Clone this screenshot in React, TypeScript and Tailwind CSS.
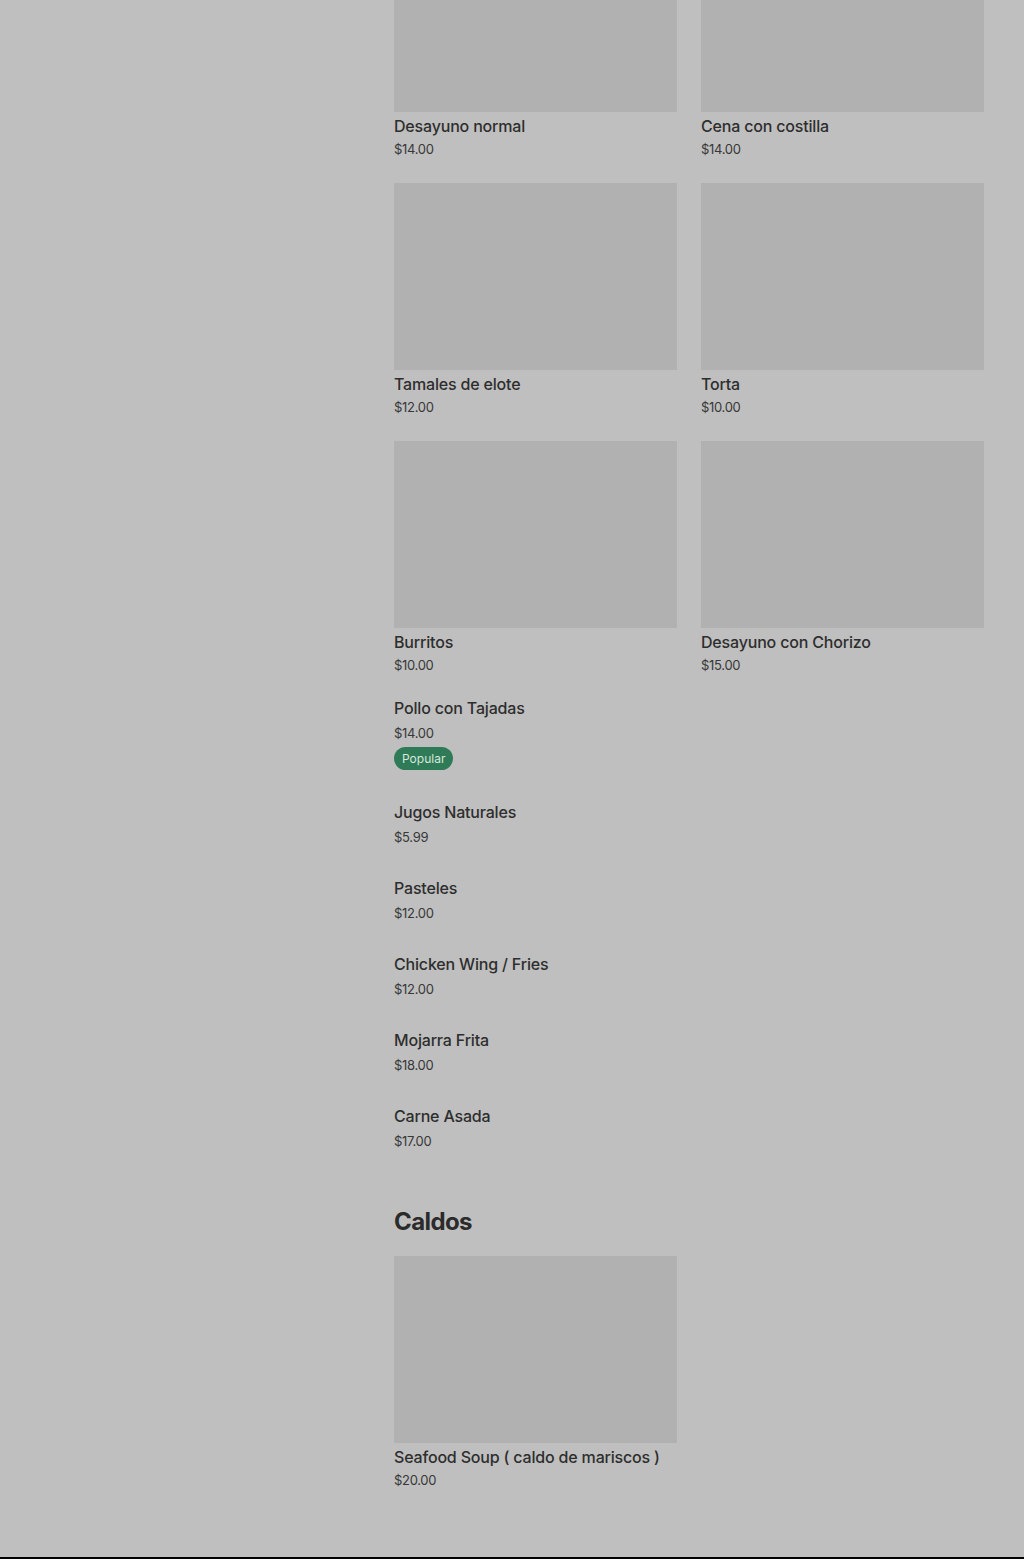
import React from "react";

interface Item {
  name: string;
  price: string;
  popular?: boolean;
}

const gridItems: Item[] = [
  { name: "Desayuno normal", price: "$14.00" },
  { name: "Cena con costilla", price: "$14.00" },
  { name: "Tamales de elote", price: "$12.00" },
  { name: "Torta", price: "$10.00" },
  { name: "Burritos", price: "$10.00" },
  { name: "Desayuno con Chorizo", price: "$15.00" },
];

const listItems: Item[] = [
  { name: "Pollo con Tajadas", price: "$14.00", popular: true },
  { name: "Jugos Naturales", price: "$5.99" },
  { name: "Pasteles", price: "$12.00" },
  { name: "Chicken Wing / Fries", price: "$12.00" },
  { name: "Mojarra Frita", price: "$18.00" },
  { name: "Carne Asada", price: "$17.00" },
];

function Card({ item }: { item: Item }) {
  return (
    <div className="flex flex-col">
      <div className="h-[187px] w-full bg-[#b1b1b1]"></div>
      <div className="mt-1 text-[16px] leading-5 font-medium tracking-[-0.18px] text-[#2e2e2e]">{item.name}</div>
      <div className="mt-1 text-[13px] leading-[18px] text-[#383838] tracking-[-0.3px]">{item.price}</div>
    </div>
  );
}

function Row({ item }: { item: Item }) {
  return (
    <div className="flex flex-col pb-8">
      <div className="text-[16px] leading-5 font-medium tracking-[-0.18px] text-[#2e2e2e]">{item.name}</div>
      <div className="mt-[6px] text-[13px] leading-[18px] text-[#383838] tracking-[-0.3px]">{item.price}</div>
      {item.popular && (
        <div className="mt-[5px] flex">
          <span className="flex h-[23px] items-center rounded-full bg-[#2f7a57] px-2 text-[12px] leading-none text-[#d6e8dc]">
            Popular
          </span>
        </div>
      )}
    </div>
  );
}

export default function App() {
  return (
    <div
      className="flex h-[1559px] flex-col overflow-hidden bg-[#bfbfbf]"
      style={{ fontFamily: "Inter, 'Liberation Sans', sans-serif" }}
    >
      <div className="flex flex-1">
        <aside className="w-[394px] shrink-0"></aside>
        <main className="-mt-[75px] w-[590px]">
          <div className="grid grid-cols-2 gap-x-6 gap-y-[25px]">
            {gridItems.map((it) => (
              <Card key={it.name} item={it} />
            ))}
          </div>

          <div className="mt-6 w-[283px]">
            {listItems.map((it) => (
              <Row key={it.name} item={it} />
            ))}
          </div>

          <h2 className="mt-6 text-[24px] leading-8 font-bold tracking-[-0.6px] text-[#2b2b2b]">Caldos</h2>
          <div className="mt-[18px] grid grid-cols-2 gap-x-6">
            <Card item={{ name: "Seafood Soup ( caldo de mariscos )", price: "$20.00" }} />
          </div>
        </main>
      </div>
      <div className="h-[2px] bg-black"></div>
    </div>
  );
}
